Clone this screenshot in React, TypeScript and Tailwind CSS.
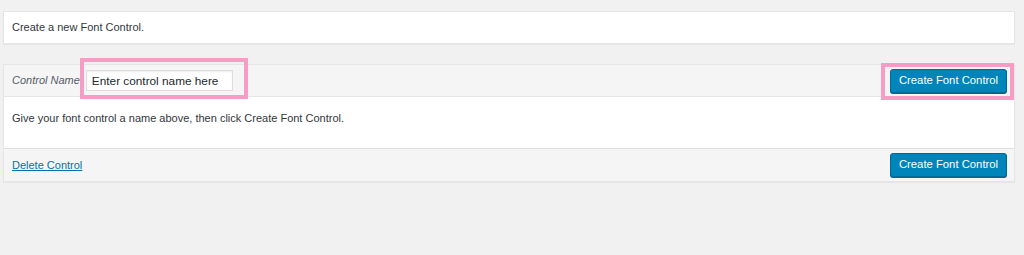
export default function App() {
  return (
    <div className="min-h-[255px] bg-[#f1f1f1] pl-[3px] pr-[9px] pt-[11px] font-['Liberation_Sans',Arial,sans-serif] text-[11px] text-[#32373c]">
      {/* Notice */}
      <div className="flex h-[33px] items-center border border-[#e5e5e5] bg-white px-[8px] shadow-[0_1px_1px_rgba(0,0,0,0.04)]">
        Create a new Font Control.
      </div>

      {/* Panel */}
      <div className="mt-[20px] border border-[#e5e5e5] bg-white shadow-[0_1px_1px_rgba(0,0,0,0.04)]">
        {/* Header */}
        <div className="flex h-[32px] items-center justify-between border-b border-[#e5e5e5] bg-[#f5f5f5] pl-[8px] pr-[7px]">
          <div className="flex items-center gap-[6px]">
            <span className="italic text-[#555d66]">Control Name</span>
            <div className="relative">
              <input
                readOnly
                value="Enter control name here"
                className="h-[21px] w-[147px] border border-[#ddd] bg-white px-[5px] text-[11.8px] text-[#23282d] shadow-[inset_0_1px_2px_rgba(0,0,0,0.07)] outline-none"
              />
              <div className="pointer-events-none absolute -bottom-[8px] -left-[6px] -right-[15px] -top-[12px] border-[4px] border-[#f79dc5]" />
            </div>
          </div>
          <div className="relative">
            <CreateButton />
            <div className="pointer-events-none absolute -bottom-[7px] -left-[9px] -right-[7px] -top-[6px] border-[4px] border-[#f79dc5]" />
          </div>
        </div>

        {/* Body */}
        <div className="h-[51px] px-[8px] pt-[13px]">
          Give your font control a name above, then click Create Font Control.
        </div>

        {/* Footer */}
        <div className="flex h-[33px] items-center justify-between border-t border-[#ddd] bg-[#f5f5f5] pl-[8px] pr-[7px]">
          <a href="#" className="text-[#0073aa] underline">
            Delete Control
          </a>
          <CreateButton />
        </div>
      </div>
    </div>
  );
}

function CreateButton() {
  return (
    <button className="h-[24px] w-[117px] rounded-[3px] border border-[#006799] bg-[#0085ba] text-[11.3px] leading-none text-white shadow-[0_1px_0_#006799]">
      Create Font Control
    </button>
  );
}
